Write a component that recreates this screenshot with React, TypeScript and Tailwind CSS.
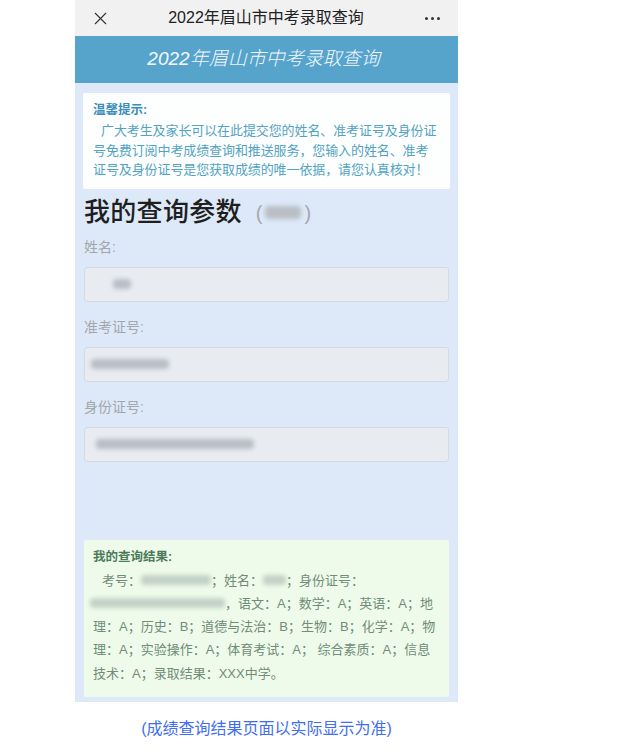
import { X } from "lucide-react"

const font = "font-['Liberation_Sans','Noto_Sans_CJK_SC',sans-serif]"

const Blur = ({ w, h = 9, className = "" }: { w: number; h?: number; className?: string }) => (
  <span
    className={`inline-block align-middle rounded-sm bg-[#b9bec6] blur-[2px] ${className}`}
    style={{ width: w, height: h }}
  />
)

const Field = ({ label, blurW }: { label: string; blurW: number }) => (
  <div className="flex flex-col">
    <div className="h-[20px] text-[14px] leading-[20px] text-[#a3a7ad]">{label}</div>
    <div className="mt-[10px] flex h-[35px] items-center rounded-[3px] border border-[#d5dae1] bg-[#e8ebf0]">
      <Blur w={blurW} h={10} className="bg-[#b3b7bd]" />
    </div>
  </div>
)

export default function App() {
  return (
    <div className={`min-h-[756px] w-[619px] bg-white ${font}`}>
      <div className="ml-[75px] flex w-[383px] flex-col">
        {/* wechat top bar */}
        <div className="flex h-[36px] items-center justify-between bg-[#f1f1f2] pl-[15px] pr-[18px]">
          <X size={21} strokeWidth={1.3} className="text-[#333]" />
          <div className="-ml-[4px] text-[16px] text-[#222]">2022年眉山市中考录取查询</div>
          <div className="flex gap-[3px]">
            <span className="h-[3px] w-[3px] rounded-full bg-[#333]" />
            <span className="h-[3px] w-[3px] rounded-full bg-[#333]" />
            <span className="h-[3px] w-[3px] rounded-full bg-[#333]" />
          </div>
        </div>

        {/* page header */}
        <div className="flex h-[47px] items-center justify-center bg-[#56a3cc] pr-[6px] text-[19px] font-light italic text-[#f4f9fc]">
          2022年眉山市中考录取查询
        </div>

        <div className="flex flex-col bg-[#dde9f8] px-[9px] pb-[5px] pt-[10px]">
          <div className="-mx-px rounded-[2px] bg-[#fdfefe] px-[10px] pb-[9px] pt-[9px]">
            <div className="text-[12.5px] font-bold leading-[16px] text-[#3a8cbb]">温馨提示:</div>
            <div className="mt-[3px] whitespace-nowrap text-[13px] leading-[19.5px] tracking-[-0.1px] text-[#52a3c2]">
              <div className="pl-[8px]">广大考生及家长可以在此提交您的姓名、准考证号及身份证</div>
              <div>号免费订阅中考成绩查询和推送服务，您输入的姓名、准考</div>
              <div>证号及身份证号是您获取成绩的唯一依据，请您认真核对！</div>
            </div>
          </div>

          <div className="mt-[8px] flex h-[32px] items-center">
            <span className="text-[26px] font-medium tracking-[0.3px] text-[#1f1f1f]">我的查询参数</span>
            <span className="ml-[14px] text-[20px] text-[#a4a8ae]">(</span>
            <Blur w={36} h={13} className="mx-[3px] bg-[#8d9198]" />
            <span className="text-[20px] text-[#a4a8ae]">)</span>
          </div>

          <div className="mt-[8px] flex flex-col gap-[15px]">
            <div className="[&_span]:ml-[28px]">
              <Field label="姓名:" blurW={18} />
            </div>
            <div className="[&_span]:ml-[6px]">
              <Field label="准考证号:" blurW={78} />
            </div>
            <div className="[&_span]:ml-[11px]">
              <Field label="身份证号:" blurW={158} />
            </div>
          </div>

          <div className="mt-[78px] rounded-[2px] bg-[#eefbea] px-[9px] pb-[12px] pt-[9px]">
            <div className="text-[12.5px] font-bold leading-[16px] text-[#4d7a5b]">我的查询结果:</div>
            <div className="mt-[4px] whitespace-nowrap text-[13px] leading-[23.3px] text-[#718c79]">
              <div className="flex items-center pl-[9px]">
                考号：<Blur w={70} h={10} className="bg-[#c4d2c7]" />；姓名：<Blur w={23} h={10} className="bg-[#c4d2c7]" />；身份证号：
              </div>
              <div className="flex items-center">
                <Blur w={135} h={10} className="-ml-[3px] bg-[#c4d2c7]" />，语文：A；数学：A；英语：A；地
              </div>
              <div>理：A；历史：B；道德与法治：B；生物：B；化学：A；物</div>
              <div>理：A；实验操作：A；体育考试：A； 综合素质：A；信息</div>
              <div>技术：A；录取结果：XXX中学。</div>
            </div>
          </div>
        </div>

        <div className="mt-[15px] text-center text-[16px] text-[#3f6ef0]">(成绩查询结果页面以实际显示为准)</div>
      </div>
    </div>
  )
}
